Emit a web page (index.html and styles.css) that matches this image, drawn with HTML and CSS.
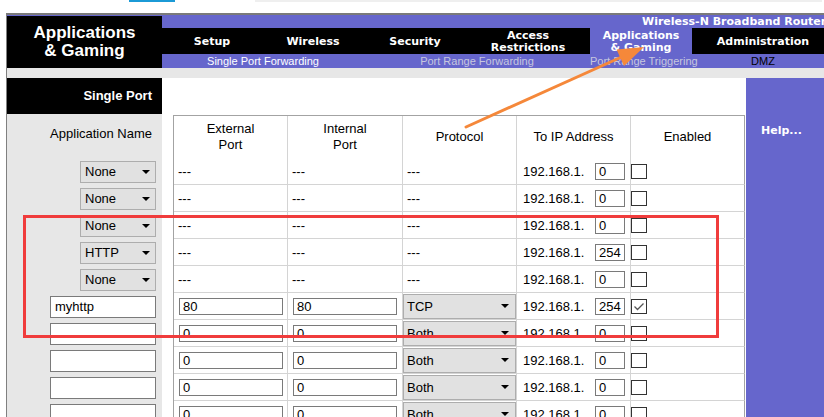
FILE: index.html
```html
<!DOCTYPE html>
<html>
<head>
<meta charset="utf-8">
<title>Applications &amp; Gaming</title>
<link rel="stylesheet" href="styles.css">
</head>
<body>
<div class="top"><span class="tb-blue"></span><span class="tb-gray"></span></div>
<div class="frame">
  <header class="head">
    <div class="brand">Applications<br>&amp; Gaming</div>
    <div class="headright">
      <div class="model">Wireless-N Broadband Router</div>
      <nav class="nav">
        <div class="nv n-setup">Setup</div>
        <div class="nv n-wireless">Wireless</div>
        <div class="nv n-security">Security</div>
        <div class="nv n-access">Access<br>Restrictions</div>
        <div class="nv n-apps active">Applications<br>&amp; Gaming</div>
        <div class="nv n-admin">Administration</div>
      </nav>
      <div class="subnav">
        <div class="sn s1 cur">Single Port Forwarding</div>
        <div class="sn s2">Port Range Forwarding</div>
        <div class="sn s3">Port Range Triggering</div>
        <div class="sn s4 dmz">DMZ</div>
      </div>
    </div>
  </header>
  <div class="band"></div>
  <div class="main">
    <div class="left">
      <div class="ltitle">Single Port</div>
      <div class="llabel">Application Name</div>
      <div class="lrow"><div class="sel sel-app"><span>None</span><i class="tri"></i></div></div>
      <div class="lrow"><div class="sel sel-app"><span>None</span><i class="tri"></i></div></div>
      <div class="lrow"><div class="sel sel-app"><span>None</span><i class="tri"></i></div></div>
      <div class="lrow"><div class="sel sel-app"><span>HTTP</span><i class="tri"></i></div></div>
      <div class="lrow"><div class="sel sel-app"><span>None</span><i class="tri"></i></div></div>
      <div class="lrow"><div class="txt txt-name">myhttp</div></div>
      <div class="lrow"><div class="txt txt-name"></div></div>
      <div class="lrow"><div class="txt txt-name"></div></div>
      <div class="lrow"><div class="txt txt-name"></div></div>
      <div class="lrow"><div class="txt txt-name"></div></div>
    </div>
    <div class="mid">
      <div class="grid">
        <div class="hc">External<br>Port</div>
        <div class="hc">Internal<br>Port</div>
        <div class="hc">Protocol</div>
        <div class="hc">To IP Address</div>
        <div class="hc">Enabled</div>

        <div class="c">---</div><div class="c">---</div><div class="c">---</div>
        <div class="c ip">192.168.1.<div class="txt txt-ip">0</div></div><div class="c en"><span class="cb"></span></div>

        <div class="c">---</div><div class="c">---</div><div class="c">---</div>
        <div class="c ip">192.168.1.<div class="txt txt-ip">0</div></div><div class="c en"><span class="cb"></span></div>

        <div class="c">---</div><div class="c">---</div><div class="c">---</div>
        <div class="c ip">192.168.1.<div class="txt txt-ip">0</div></div><div class="c en"><span class="cb"></span></div>

        <div class="c">---</div><div class="c">---</div><div class="c">---</div>
        <div class="c ip">192.168.1.<div class="txt txt-ip">254</div></div><div class="c en"><span class="cb"></span></div>

        <div class="c">---</div><div class="c">---</div><div class="c">---</div>
        <div class="c ip">192.168.1.<div class="txt txt-ip">0</div></div><div class="c en"><span class="cb"></span></div>

        <div class="c"><div class="txt txt-port">80</div></div><div class="c"><div class="txt txt-port">80</div></div>
        <div class="c pc"><div class="sel sel-proto"><span>TCP</span><i class="tri"></i></div></div>
        <div class="c ip">192.168.1.<div class="txt txt-ip">254</div></div>
        <div class="c en"><span class="cb"><svg viewBox="0 0 16 15" width="16" height="15"><path d="M3.5 7.5 L6.5 10.5 L12.5 4.5" fill="none" stroke="#555" stroke-width="1.3"/></svg></span></div>

        <div class="c"><div class="txt txt-port">0</div></div><div class="c"><div class="txt txt-port">0</div></div>
        <div class="c pc"><div class="sel sel-proto"><span>Both</span><i class="tri"></i></div></div>
        <div class="c ip">192.168.1.<div class="txt txt-ip">0</div></div><div class="c en"><span class="cb"></span></div>

        <div class="c"><div class="txt txt-port">0</div></div><div class="c"><div class="txt txt-port">0</div></div>
        <div class="c pc"><div class="sel sel-proto"><span>Both</span><i class="tri"></i></div></div>
        <div class="c ip">192.168.1.<div class="txt txt-ip">0</div></div><div class="c en"><span class="cb"></span></div>

        <div class="c"><div class="txt txt-port">0</div></div><div class="c"><div class="txt txt-port">0</div></div>
        <div class="c pc"><div class="sel sel-proto"><span>Both</span><i class="tri"></i></div></div>
        <div class="c ip">192.168.1.<div class="txt txt-ip">0</div></div><div class="c en"><span class="cb"></span></div>

        <div class="c"><div class="txt txt-port">0</div></div><div class="c"><div class="txt txt-port">0</div></div>
        <div class="c pc"><div class="sel sel-proto"><span>Both</span><i class="tri"></i></div></div>
        <div class="c ip">192.168.1.<div class="txt txt-ip">0</div></div><div class="c en"><span class="cb"></span></div>
      </div>
    </div>
    <div class="help">Help...</div>
  </div>
</div>
<div class="redbox"></div>
<svg class="arrow" width="824" height="417" viewBox="0 0 824 417">
  <line x1="466" y1="127" x2="626" y2="55" stroke="#f5883a" stroke-width="3" stroke-linecap="round"/>
  <polygon points="644,47 616.6,49.5 624,65.9" fill="#f5883a"/>
</svg>
</body>
</html>
```

FILE: styles.css
```css
* { box-sizing: border-box; }

html, body {
  margin: 0;
  padding: 0;
}

body {
  width: 824px;
  height: 417px;
  overflow: hidden;
  position: relative;
  background: #fff;
  font-family: "Liberation Sans", Arial, sans-serif;
  font-size: 13px;
  color: #000;
}

/* browser strip */
.top {
  height: 13px;
  display: flex;
  align-items: flex-start;
}
.tb-blue {
  margin-left: 129px;
  width: 46px;
  height: 2px;
  background: #1b9ad6;
}
.tb-gray {
  margin-left: 80px;
  width: 567px;
  height: 2px;
  background: #efefef;
}

/* frame */
.frame {
  margin-left: 6px;
  border-left: 1px solid #808080;
  border-top: 2px solid #7a7a7a;
  height: 404px;
  display: flex;
  flex-direction: column;
}

.head {
  display: grid;
  grid-template-columns: 155px 662px;
  height: 53px;
  background: #6666cc;
  flex-shrink: 0;
}

.brand {
  background: #000;
  margin-top: 1px;
  color: #fff;
  font-family: "Liberation Sans", Arial, sans-serif;
  font-weight: bold;
  font-size: 17px;
  line-height: 18px;
  text-align: center;
  display: flex;
  align-items: center;
  justify-content: center;
}

.headright {
  display: flex;
  flex-direction: column;
  overflow: hidden;
}

.model {
  height: 13px;
  padding-left: 480px;
  color: #fff;
  font-family: "DejaVu Sans", Verdana, sans-serif;
  font-weight: bold;
  font-size: 11px;
  line-height: 13px;
  white-space: nowrap;
  overflow: hidden;
}

.nav {
  height: 26px;
  background: #000;
  display: flex;
  overflow: hidden;
}
.nv {
  flex-shrink: 0;
  color: #fff;
  font-family: "DejaVu Sans", Verdana, sans-serif;
  font-weight: bold;
  font-size: 11px;
  line-height: 12px;
  text-align: center;
  display: flex;
  align-items: center;
  justify-content: center;
  white-space: nowrap;
  padding-top: 2px;
}
.nv.active { background: #6666cc; }
.n-setup { width: 100px; }
.n-wireless { width: 102px; }
.n-security { width: 102px; }
.n-access { width: 124px; }
.n-apps { width: 102px; }
.n-admin { width: 142px; }

.subnav {
  height: 14px;
  display: flex;
  overflow: hidden;
  font-size: 11px;
  line-height: 14px;
}
.sn {
  flex-shrink: 0;
  text-align: center;
  white-space: nowrap;
  color: #c6c6de;
}
.sn.cur { color: #fff; }
.sn.dmz { color: #000; }
.s1 { width: 202px; }
.s2 { width: 226px; }
.s3 { width: 102px; }
.s4 { width: 142px; }

.band {
  height: 10px;
  background: #e7e7e7;
  flex-shrink: 0;
}

/* main */
.main {
  flex: 1;
  display: grid;
  grid-template-columns: 155px 584px 78px;
  overflow: hidden;
}

.left {
  background: #e7e7e7;
}
.ltitle {
  height: 36px;
  background: #000;
  color: #fff;
  font-weight: bold;
  font-size: 13px;
  line-height: 36px;
  text-align: right;
  padding-right: 10px;
}
.llabel {
  height: 44px;
  display: flex;
  align-items: center;
  justify-content: flex-end;
  padding-right: 10px;
  padding-bottom: 5px;
}
.lrow {
  height: 27px;
  display: flex;
  align-items: center;
  justify-content: flex-end;
  padding-right: 6px;
}

/* fake controls */
.sel {
  display: flex;
  align-items: center;
  justify-content: space-between;
  background: #e1e1e1;
  border: 1px solid #adadad;
  font-size: 13px;
}
.sel-app {
  width: 76px;
  height: 22px;
  padding: 0 5px 0 4px;
}
.sel-proto {
  width: 113px;
  height: 25px;
  padding: 0 6px 0 3px;
}
.tri {
  width: 0;
  height: 0;
  border-left: 4px solid transparent;
  border-right: 4px solid transparent;
  border-top: 4px solid #000;
}

.txt {
  background: #fff;
  border: 1px solid #7a7a7a;
  font-size: 13px;
  display: flex;
  align-items: center;
  white-space: nowrap;
}
.txt-name {
  width: 106px;
  height: 22px;
  padding-left: 4px;
}
.txt-port {
  width: 104px;
  height: 17px;
  margin-left: 5px;
  padding-left: 3px;
  padding-top: 1px;
}
.txt-ip {
  width: 30px;
  height: 17px;
  padding-left: 3px;
  padding-top: 1px;
}

.mid {
  background: #fff;
  padding: 37px 0 0 11px;
}

.grid {
  display: grid;
  grid-template-columns: 114px 115px 114px 114px 114px;
  grid-template-rows: 42px;
  grid-auto-rows: 27px;
  width: 572px;
  border-top: 1px solid #a3a3a3;
  border-left: 1px solid #a3a3a3;
}
.hc {
  border-right: 1px solid #d4d4d4;
  display: flex;
  align-items: center;
  justify-content: center;
  text-align: center;
  line-height: 16px;
  padding-bottom: 1px;
}
.hc:nth-child(5) { border-right-color: #a3a3a3; }

.c {
  border-right: 1px solid #d4d4d4;
  border-bottom: 1px solid #d4d4d4;
  display: flex;
  align-items: center;
  padding-left: 4px;
  white-space: nowrap;
}
.c.en {
  border-right-color: #a3a3a3;
  padding-left: 0;
}
.c.pc { padding-left: 0; }
.c.ip {
  padding: 0 5px 0 6px;
  justify-content: space-between;
}
.c:has(.txt-port) { padding-left: 0; }

.cb {
  width: 16px;
  height: 15px;
  border: 1px solid #333;
  background: #fff;
  display: block;
  position: relative;
}
.cb svg {
  position: absolute;
  left: -1px;
  top: -1px;
}

.help {
  background: #6666cc;
  color: #fff;
  font-family: "DejaVu Sans", Verdana, sans-serif;
  font-weight: bold;
  font-size: 11px;
  line-height: 13px;
  padding: 46px 0 0 15px;
}

/* annotations */
.redbox {
  position: absolute;
  left: 23px;
  top: 215px;
  width: 696px;
  height: 123px;
  border: 3px solid #f03c3c;
}
.arrow {
  position: absolute;
  left: 0;
  top: 0;
  pointer-events: none;
}
```
